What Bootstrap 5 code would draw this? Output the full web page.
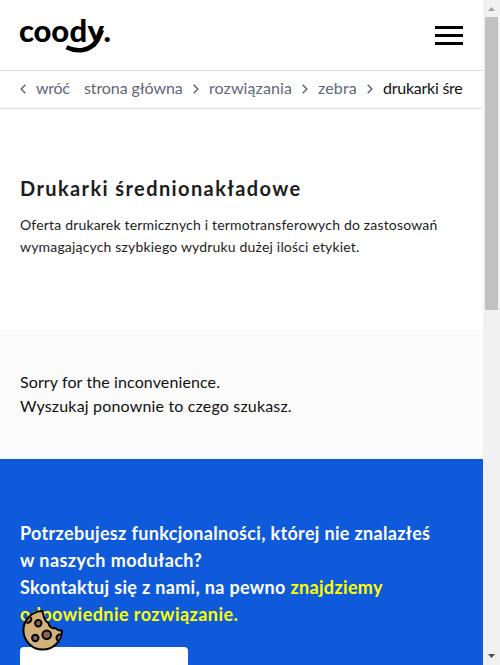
<!DOCTYPE html>
<html lang="pl">
<head>
<meta charset="utf-8">
<meta name="viewport" content="width=device-width, initial-scale=1">
<title>Drukarki średnionakładowe</title>
<link href="https://cdn.jsdelivr.net/npm/bootstrap@5.3.0/dist/css/bootstrap.min.css" rel="stylesheet">
<style>
body{font-family:Lato,"Open Sans",sans-serif;color:#1d1d1b;height:665px}
.site-head{height:71px;border-bottom:1px solid #dcdcdc;padding:0 20px}
.logo-svg{display:block;width:92px;height:36px;margin-top:1px;overflow:visible}
.burger{width:28px;gap:5px}
.burger span{height:3px;background:#000}
.crumbs{height:38px;border-bottom:1px solid #dcdcdc;padding:0 20px;font-size:16px;line-height:34px}
.crumbs>div{gap:10px}
.crumbs a,.crumbs span{color:#5f6776;text-decoration:none;white-space:nowrap;flex:none}
.crumbs .c1{width:33px;letter-spacing:-.3px;margin-right:5px}
.crumbs .c2{width:99px;letter-spacing:-.1px}
.crumbs .c3{width:83px;letter-spacing:.1px}
.crumbs .c4{width:39px;letter-spacing:.15px}
.crumbs .current{color:#111;letter-spacing:-.25px}
.crumbs svg{flex:none;width:6px;height:10px;margin-top:2px}
.intro{height:220px;padding:66px 20px 0}
.intro h1{font-size:20px;font-weight:700;line-height:26px;letter-spacing:1.4px;margin-bottom:13px}
.intro p{font-size:14px;line-height:22px;white-space:nowrap;letter-spacing:.18px}
.notice{height:130px;background:#fbfbfb;padding:41px 20px 0;font-size:16px;line-height:24px;color:#111}
.n1{letter-spacing:.11px}
.n2{letter-spacing:.17px}
.contact{height:206px;background:#0f5adb;padding:61px 20px 0;color:#fff}
.contact h2{font-size:18px;font-weight:700;line-height:27px;white-space:nowrap;margin-bottom:19px;letter-spacing:.33px}
.contact .wider{letter-spacing:.44px}
.contact em{font-style:normal;color:#ff0}
.cta{width:168px;height:40px;border-radius:4px;background:#fff}
.cookie{left:22px;top:609px;width:42px;height:42px}
.scroll{width:17px;background:#f1f1f1}
.thumb{width:13px;height:293px;background:#c1c1c1}
</style>
<script src="https://cdn.jsdelivr.net/npm/bootstrap@5.3.0/dist/js/bootstrap.bundle.min.js"></script>
</head>
<body class="d-flex overflow-hidden position-relative bg-white">
<div class="flex-grow-1 overflow-hidden">
  <header class="site-head d-flex justify-content-between align-items-center">
    <svg class="logo-svg" viewBox="0 0 92 36" role="img" aria-label="coody.">
      <text x="-1 13.500 31.300 49.500 67.500 83.500" y="23.500" font-family="Lato" font-weight="900" font-size="31">coody.</text>
      <path d="M46.500 29.300C58 35 71 32.500 77.500 22L82 12" fill="none" stroke="#000" stroke-width="4.600"/>
    </svg>
    <button class="burger d-flex flex-column border-0 bg-transparent p-0" aria-label="Menu"><span></span><span></span><span></span></button>
  </header>
  <nav class="crumbs"><div class="d-flex align-items-center">
    <svg viewBox="0 0 6 10"><path d="M5.300.8 1.200 5l4.100 4.200" fill="none" stroke="#5f6776" stroke-width="1.500"/></svg>
    <a href="#" class="c1">wróć</a><a href="#" class="c2">strona główna</a>
    <svg viewBox="0 0 6 10"><path d="M.7.8 4.800 5 .7 9.200" fill="none" stroke="#5f6776" stroke-width="1.500"/></svg>
    <a href="#" class="c3">rozwiązania</a>
    <svg viewBox="0 0 6 10"><path d="M.7.8 4.800 5 .7 9.200" fill="none" stroke="#5f6776" stroke-width="1.500"/></svg>
    <a href="#" class="c4">zebra</a>
    <svg viewBox="0 0 6 10"><path d="M.7.8 4.800 5 .7 9.200" fill="none" stroke="#5f6776" stroke-width="1.500"/></svg>
    <span class="current">drukarki śre</span>
  </div></nav>
  <section class="intro"><h1>Drukarki średnionakładowe</h1>
    <p class="mb-0">Oferta drukarek termicznych i termotransferowych do zastosowań<br>wymagających szybkiego wydruku dużej ilości etykiet.</p></section>
  <section class="notice"><span class="n1">Sorry for the inconvenience.</span><br><span class="n2">Wyszukaj ponownie to czego szukasz.</span></section>
  <section class="contact"><h2>Potrzebujesz funkcjonalności, której nie znalazłeś<br><span class="wider">w naszych modułach?</span><br>Skontaktuj się z nami, na pewno <em>znajdziemy</em><br><em class="wider">odpowiednie rozwiązanie.</em></h2><div class="cta"></div></section>
</div>
<svg class="cookie position-absolute" viewBox="0 0 42 42">
  <path d="M20.500 2A19.300 19.300 0 1 0 40 21.500C37 22 35 21 33.500 19 30 20 27 17.500 26.500 14 22.500 12.500 21.500 7 20.500 2Z" fill="#d3b17d" stroke="#000" stroke-width="2" stroke-linejoin="round"/>
  <g fill="#8b6250" stroke="#000" stroke-width="2"><circle cx="16.300" cy="14.300" r="3.200"/><circle cx="24.700" cy="25.700" r="4.300"/><circle cx="13.300" cy="29" r="3.200"/><path d="M4.500 13.500C9 14.500 10.500 10.500 8.500 8M39.300 25.800A3.400 3.400 0 1 0 36.500 32"/></g>
</svg>
<div class="scroll d-flex flex-column align-items-center justify-content-between flex-shrink-0">
  <div><svg class="d-block" width="17" height="17"><path d="M5 11 8.500 7 12 11Z" fill="#a3a3a3"/></svg><div class="thumb mx-auto"></div></div>
  <svg width="17" height="17"><path d="M5 6 8.500 10 12 6Z" fill="#505050"/></svg>
</div>
</body>
</html>
